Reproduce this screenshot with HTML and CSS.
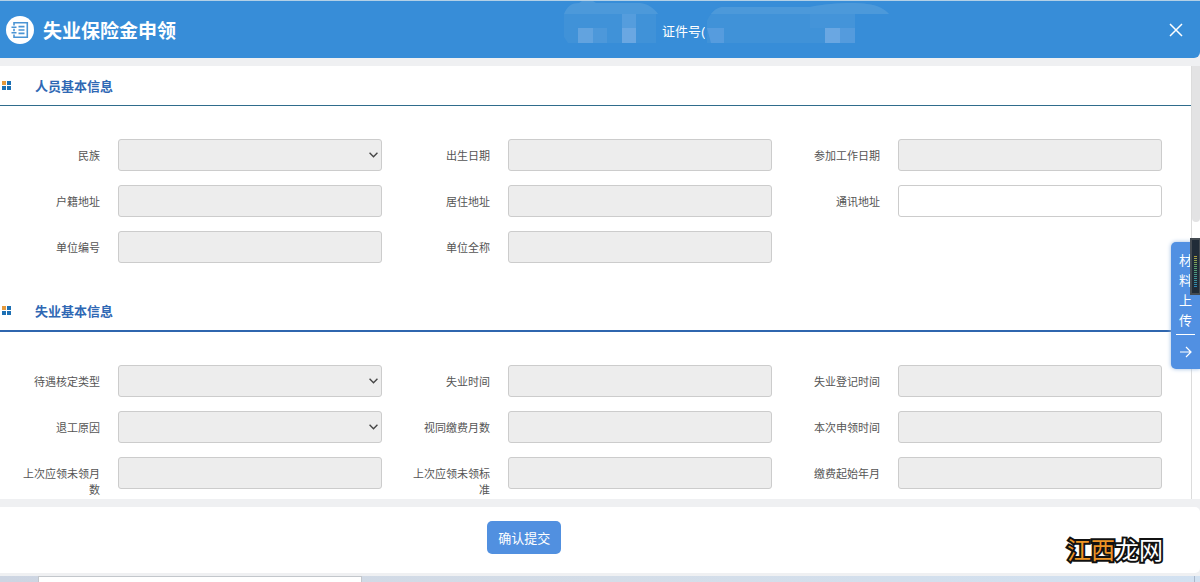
FILE: index.html
```html
<!DOCTYPE html>
<html lang="zh-CN">
<head>
<meta charset="utf-8">
<title>失业保险金申领</title>
<link rel="stylesheet" href="styles.css">
</head>
<body>
<header class="header">
  <div class="brand">
    <svg class="brand-icon" viewBox="0 0 28 28" aria-hidden="true">
      <circle cx="14" cy="14" r="14" fill="#fff"/>
      <g fill="none" stroke="#4a94d4" stroke-width="1.6">
        <path d="M8 9.500V6.700H21.300V21.300H8V18.500M8 12.700V15.300"/>
        <path d="M5.500 11.200H10.500M5.500 16.800H10.500M12.500 10.600H18.500M12.500 14H18.500M12.500 17.400H18.500"/>
      </g>
    </svg>
    <h1 class="title">失业保险金申领</h1>
  </div>
  <div class="identity">
    <svg class="mask-name" viewBox="0 0 96 57" aria-hidden="true">
      <path d="M0 13C3 5 8 2 15 2L18 0H29L32 2H76C84 3 90 7 94 13Z" fill="#4c99da"/>
      <path d="M0 13H92V42H4L0 36Z" fill="#4092d8"/>
      <path d="M14 27H29V42H14Z" fill="#62a3df"/>
      <path d="M29 27H43V42H29Z" fill="#4d98da"/>
      <path d="M58 13H72V27H58Z" fill="#559ddd"/>
      <path d="M58 27H72V42H58Z" fill="#6aa7e2"/>
    </svg>
    <span class="id-label">证件号(</span>
    <svg class="mask-id" viewBox="0 0 184 57" aria-hidden="true">
      <path d="M2 20C6 11 11 7 18 6H105C124 2 150 1 162 3C172 4 180 8 184 13H150V42H2Z" fill="#4092d8"/>
      <path d="M6 13C10 8 14 6 18 6H105C124 2 150 1 162 3C172 4 180 8 184 13Z" fill="#4c99da"/>
      <path d="M2 27H19V42H6Z" fill="#569cde"/>
      <path d="M105 13H150V27H105Z" fill="#4494d9"/>
      <path d="M120 27H135V42H120Z" fill="#6aa7e2"/>
      <path d="M135 27H150V42H135Z" fill="#549bdd"/>
    </svg>
  </div>
  <button class="close" type="button" aria-label="关闭">
    <svg class="close-icon" viewBox="0 0 14 14" aria-hidden="true"><path d="M1 1L13 13M13 1L1 13" fill="none" stroke="#fff" stroke-width="1.500"/></svg>
  </button>
</header>

<main class="main">
  <form class="form" id="claim">
    <section class="section">
      <h2 class="section-title"><svg class="tiles" viewBox="0 0 9 9" aria-hidden="true"><path d="M0 0H4V4H0Z" fill="#e59a3c"/><path d="M5 0H9V4H5ZM0 5H4V9H0ZM5 5H9V9H5Z" fill="#1d70b4"/></svg>人员基本信息</h2>
      <div class="fields">
        <div class="field"><label for="f1">民族</label><div class="pick"><select id="f1" disabled></select><svg class="chevron" viewBox="0 0 8 5" aria-hidden="true"><path d="M.5.5L4 4L7.500.5"/></svg></div></div>
        <div class="field"><label for="f2">出生日期</label><input id="f2" disabled></div>
        <div class="field"><label for="f3">参加工作日期</label><input id="f3" disabled></div>
        <div class="field"><label for="f4">户籍地址</label><input id="f4" disabled></div>
        <div class="field"><label for="f5">居住地址</label><input id="f5" disabled></div>
        <div class="field"><label for="f6">通讯地址</label><input id="f6"></div>
        <div class="field"><label for="f7">单位编号</label><input id="f7" disabled></div>
        <div class="field"><label for="f8">单位全称</label><input id="f8" disabled></div>
      </div>
    </section>
    <section class="section">
      <h2 class="section-title strong-rule"><svg class="tiles" viewBox="0 0 9 9" aria-hidden="true"><path d="M0 0H4V4H0Z" fill="#e59a3c"/><path d="M5 0H9V4H5ZM0 5H4V9H0ZM5 5H9V9H5Z" fill="#1d70b4"/></svg>失业基本信息</h2>
      <div class="fields">
        <div class="field"><label for="g1">待遇核定类型</label><div class="pick"><select id="g1" disabled></select><svg class="chevron" viewBox="0 0 8 5" aria-hidden="true"><path d="M.5.5L4 4L7.500.5"/></svg></div></div>
        <div class="field"><label for="g2">失业时间</label><input id="g2" disabled></div>
        <div class="field"><label for="g3">失业登记时间</label><input id="g3" disabled></div>
        <div class="field"><label for="g4">退工原因</label><div class="pick"><select id="g4" disabled></select><svg class="chevron" viewBox="0 0 8 5" aria-hidden="true"><path d="M.5.5L4 4L7.500.5"/></svg></div></div>
        <div class="field"><label for="g5">视同缴费月数</label><input id="g5" disabled></div>
        <div class="field"><label for="g6">本次申领时间</label><input id="g6" disabled></div>
        <div class="field"><label for="g7">上次应领未领月数</label><input id="g7" disabled></div>
        <div class="field"><label for="g8">上次应领未领标准</label><input id="g8" disabled></div>
        <div class="field"><label for="g9">缴费起始年月</label><input id="g9" disabled></div>
      </div>
    </section>
  </form>
  <div class="scrollbar"><div class="thumb"></div></div>
  <button class="upload" type="button">
    <span class="upload-text">材料上传</span>
    <svg class="arrow" viewBox="0 0 12 12" aria-hidden="true"><path d="M0 6H11M6 1L11 6L6 11" fill="none" stroke="#fff" stroke-width="1.200"/></svg>
  </button>
  <div class="meter"><div class="meter-level"></div></div>
</main>

<footer class="footer">
  <button class="submit" type="submit" form="claim">确认提交</button>
  <div class="watermark"><span class="watermark-lead">江西</span>龙网</div>
</footer>
<div class="taskbar"><div class="taskbar-tab"></div><div class="taskbar-end"></div></div>
</body>
</html>
```
FILE: styles.css
```css
* { box-sizing: border-box; }

body {
  margin: 0;
  height: 100vh;
  display: flex;
  flex-direction: column;
  overflow: hidden;
  background: #eff0f2;
  font-family: "Liberation Sans", "Noto Sans CJK SC", sans-serif;
  font-size: 13px;
}

button, input, select { font: inherit; }

.header {
  flex: none;
  display: flex;
  align-items: stretch;
  border-top: 1px solid #b3d0e6;
  border-radius: 0 0 6px 0;
  background: #378dd8;
  color: #fff;
}

.brand {
  flex: 0 0 47%;
  display: flex;
  align-items: center;
  gap: 9px;
  padding-left: 6px;
}

.brand-icon { width: 28px; height: 28px; }

.title {
  margin: 0;
  padding-top: 4px;
  font-size: 19px;
  line-height: 28px;
}

.identity {
  flex: 1;
  display: flex;
  align-items: center;
}

.mask-name { width: 96px; height: 57px; }
.mask-id { width: 184px; height: 57px; }

.id-label {
  width: 43px;
  margin-left: 2px;
  padding-top: 4px;
  overflow: hidden;
  line-height: 20px;
  white-space: nowrap;
}

.close {
  display: flex;
  align-items: center;
  padding: 0 17px;
  border: 0;
  background: none;
}

.close-icon { width: 14px; height: 14px; }

.main {
  position: relative;
  flex: 1;
  min-height: 0;
  display: flex;
  margin: 8px 0;
  background: #fff;
}

.form {
  flex: 1;
  overflow: hidden;
  border-right: 1px solid #dcdcdc;
}

.section-title {
  display: flex;
  align-items: center;
  gap: 24px;
  height: 40px;
  margin: 0;
  padding: 0 0 1px 2px;
  border-bottom: 1px solid #2f6c8c;
  color: #2f68b4;
  font-size: 13px;
}

.strong-rule { border-bottom: 2px solid #2f66ae; }

.tiles { width: 9px; height: 9px; }

.fields {
  display: grid;
  grid-template-columns: repeat(3, 1fr);
  gap: 14px 0;
  padding: 33px 21px 29px 0;
}

.field {
  display: grid;
  grid-template-columns: 80px 1fr;
  align-items: start;
  gap: 18px;
  height: 32px;
  padding: 0 8px 0 20px;
}

.field label {
  padding-top: 9px;
  color: #555;
  font-size: 11px;
  line-height: 16px;
  text-align: right;
}

.field input, .field select {
  display: block;
  width: 100%;
  height: 32px;
  padding: 0 8px;
  border: 1px solid #ccc;
  border-radius: 3px;
  background: #fff;
  appearance: none;
}

.field input:disabled, .field select:disabled {
  background: #ededed;
  opacity: 1;
}

.pick { position: relative; }

.chevron {
  position: absolute;
  right: 4px;
  top: 13px;
  width: 9px;
  height: 6px;
  fill: none;
  stroke: #444;
  stroke-width: 1.2;
}

.scrollbar { width: 8px; }

.thumb {
  height: 36%;
  border-radius: 0 0 4px 4px;
  background: #e3e3e4;
}

.upload {
  position: absolute;
  right: 0;
  top: 176px;
  display: flex;
  flex-direction: column;
  align-items: center;
  width: 29px;
  padding: 9px 2px 11px;
  border: 0;
  border-radius: 5px 0 0 5px;
  background: #5190e2;
  color: #fff;
  box-shadow: 0 0 4px #9dbbe0;
}

.upload-text {
  width: 19px;
  padding: 0 3px 3px;
  border-bottom: 1px solid #fff;
  line-height: 20px;
}

.arrow { width: 12px; height: 12px; margin-top: 11px; }

.meter {
  position: absolute;
  right: 0;
  top: 172px;
  display: flex;
  justify-content: center;
  width: 10px;
  height: 57px;
  padding: 16px 0 5px;
  border: 2px solid #444b52;
  border-right-width: 1px;
  background: #202c38;
}

.meter-level {
  width: 3px;
  background: repeating-linear-gradient(transparent 0 1px, #202c38 1px 2px), linear-gradient(#b4a23e, #5aa06a 35%, #2a86b8);
}

.footer {
  flex: none;
  display: flex;
  align-items: flex-start;
  justify-content: space-between;
  padding: 14px 37px 12px 40.6%;
  border-radius: 0 5px 5px 0;
  background: #fff;
}

.submit {
  height: 33px;
  padding: 0 11px;
  border: 0;
  border-radius: 5px;
  background: #5190e0;
  color: #fff;
}

.watermark {
  margin-top: 12px;
  color: #fff;
  font-size: 24px;
  line-height: 36px;
  margin-bottom: -8px;
  -webkit-text-stroke: 4px #111;
  paint-order: stroke fill;
}

.watermark-lead { color: #ee9526; }

.taskbar {
  flex: none;
  display: flex;
  justify-content: space-between;
  height: 6px;
  margin-top: 3px;
  padding: 0 5px 0 38px;
  background: linear-gradient(90deg, #cdd5e2, #d4dde8 50%, #d2e1f1);
}

.taskbar-tab {
  width: 28%;
  border: 1px solid #c3c7cc;
  border-bottom: 0;
  background: #fff;
}

.taskbar-end { width: 1px; background: #a9b8cb; }
```
